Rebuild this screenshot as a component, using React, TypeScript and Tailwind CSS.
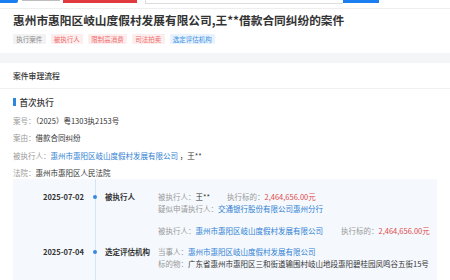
import React from "react";

const F = { fontFamily: '"Noto Sans CJK SC", "Noto Sans", sans-serif' };

function Tag({ text, tone }: { text: string; tone: "gray" | "red" | "blue" }) {
  const cls =
    tone === "gray"
      ? "bg-[#f2f2f2] text-[#8a8a8a]"
      : tone === "red"
      ? "bg-[#fdeeee] text-[#f06868]"
      : "bg-[#e8f3fd] text-[#3d8fe3]";
  return (
    <span className={`h-[10px] px-[3.25px] flex items-center text-[6.5px] leading-[10px] rounded-[1px] ${cls}`}>
      {text}
    </span>
  );
}

function Label({ children }: { children: React.ReactNode }) {
  return <span className="text-[#9a9a9a]">{children}</span>;
}

export default function App() {
  return (
    <div style={F} className="w-[450px] h-[280px] overflow-hidden bg-white text-[#333]">
      {/* cut-off header */}
      <div className="h-[9px] flex items-start border-b border-[#eeeeee]">
        <div className="w-[18px] h-[3px] bg-[#1a7ef0] rounded-br-[2px]" />
        <div className="ml-[4px] w-[38px] h-[1px] bg-[#bdbdbd]" />
        <div className="ml-[3px] w-[74px] h-[3px] bg-[#e0393e]" />
        <div className="ml-[8px] w-[198px] h-[3.5px] border-l border-b border-[#dcdcdc]" />
        <div className="w-[36px] h-[3px] bg-[#1a7ef0]" />
      </div>

      {/* title section */}
      <div className="px-[13px] pt-[3px] pb-[9px]">
        <div className="text-[11.7px] leading-[16px] font-bold text-[#333] whitespace-nowrap">
          惠州市惠阳区岐山度假村发展有限公司,王**借款合同纠纷的案件
        </div>
        <div className="mt-[6px] flex gap-[5px]">
          <Tag text="执行案件" tone="gray" />
          <Tag text="被执行人" tone="red" />
          <Tag text="限制高消费" tone="red" />
          <Tag text="司法拍卖" tone="red" />
          <Tag text="选定评估机构" tone="blue" />
        </div>
      </div>

      <div className="h-[10px] bg-[#f4f5f6]" />

      {/* card */}
      <div className="bg-white">
        <div className="h-[26px] px-[13px] flex items-center border-b border-[#f0f0f0] text-[7.8px] font-medium text-[#333]">
          案件审理流程
        </div>
        <div className="px-[13px]">
          <div className="mt-[7px] flex items-center h-[12px]">
            <div className="w-[2.5px] h-[8px] bg-[#2f86e0]" />
            <div className="ml-[4px] text-[8.6px] leading-[12px] font-medium text-[#333]">首次执行</div>
          </div>
          <div className="mt-[7px] flex flex-col gap-[5.33px] text-[7.5px] leading-[12px]">
            <div>
              <Label>案号：</Label>
              <span className="text-[#333]">（2025）粤1303执2153号</span>
            </div>
            <div>
              <Label>案由：</Label>
              <span className="text-[#333]">借款合同纠纷</span>
            </div>
            <div>
              <Label>被执行人：</Label>
              <span className="text-[#2f80d3]">惠州市惠阳区岐山度假村发展有限公司</span>
              <span className="text-[#333]"> ，王**</span>
            </div>
            <div>
              <Label>法院：</Label>
              <span className="text-[#333]">惠州市惠阳区人民法院</span>
            </div>
          </div>

          {/* timeline */}
          <div className="relative bg-[#f5f9fd] pl-[30px] pt-[12px] pb-[20px] text-[7.5px] leading-[12px]">
            <div className="absolute left-[82px] top-0 bottom-0 w-px bg-[#d3e5f8]" />

            <div className="relative flex">
              <div className="w-[46px] font-bold text-[#333]">2025-07-02</div>
              <div className="w-[12px] flex justify-center pt-[4px]">
                <div className="w-[4px] h-[4px] rounded-full bg-[#3a88dd]" />
              </div>
              <div className="w-[57px] pl-[4px] font-bold text-[#333]">被执行人</div>
              <div className="flex-1 flex flex-col gap-[10px]">
                <div>
                  <div className="flex gap-x-[17px]">
                    <span>
                      <Label>被执行人：</Label>
                      <span className="text-[#333]">王**</span>
                    </span>
                    <span>
                      <Label>执行标的：</Label>
                      <span className="text-[#e04a4a]">2,464,656.00元</span>
                    </span>
                  </div>
                  <div>
                    <Label>疑似申请执行人：</Label>
                    <span className="text-[#2f80d3]">交通银行股份有限公司惠州分行</span>
                  </div>
                </div>
                <div className="flex gap-x-[18px] whitespace-nowrap">
                  <span>
                    <Label>被执行人：</Label>
                    <span className="text-[#2f80d3]">惠州市惠阳区岐山度假村发展有限公司</span>
                  </span>
                  <span>
                    <Label>执行标的：</Label>
                    <span className="text-[#e04a4a]">2,464,656.00元</span>
                  </span>
                </div>
              </div>
            </div>

            <div className="relative flex mt-[9px]">
              <div className="w-[46px] font-bold text-[#333]">2025-07-04</div>
              <div className="w-[12px] flex justify-center pt-[4px]">
                <div className="w-[4px] h-[4px] rounded-full bg-[#3a88dd]" />
              </div>
              <div className="w-[57px] pl-[4px] font-bold text-[#333] whitespace-nowrap">选定评估机构</div>
              <div className="flex-1">
                <div>
                  <Label>当事人：</Label>
                  <span className="text-[#2f80d3]">惠州市惠阳区岐山度假村发展有限公司</span>
                </div>
                <div className="whitespace-nowrap">
                  <Label>标的物：</Label>
                  <span className="text-[#333]">广东省惠州市惠阳区三和街道输围村岐山地段惠阳碧桂园凤鸣谷五街15号</span>
                </div>
              </div>
            </div>
          </div>
        </div>
      </div>
    </div>
  );
}
